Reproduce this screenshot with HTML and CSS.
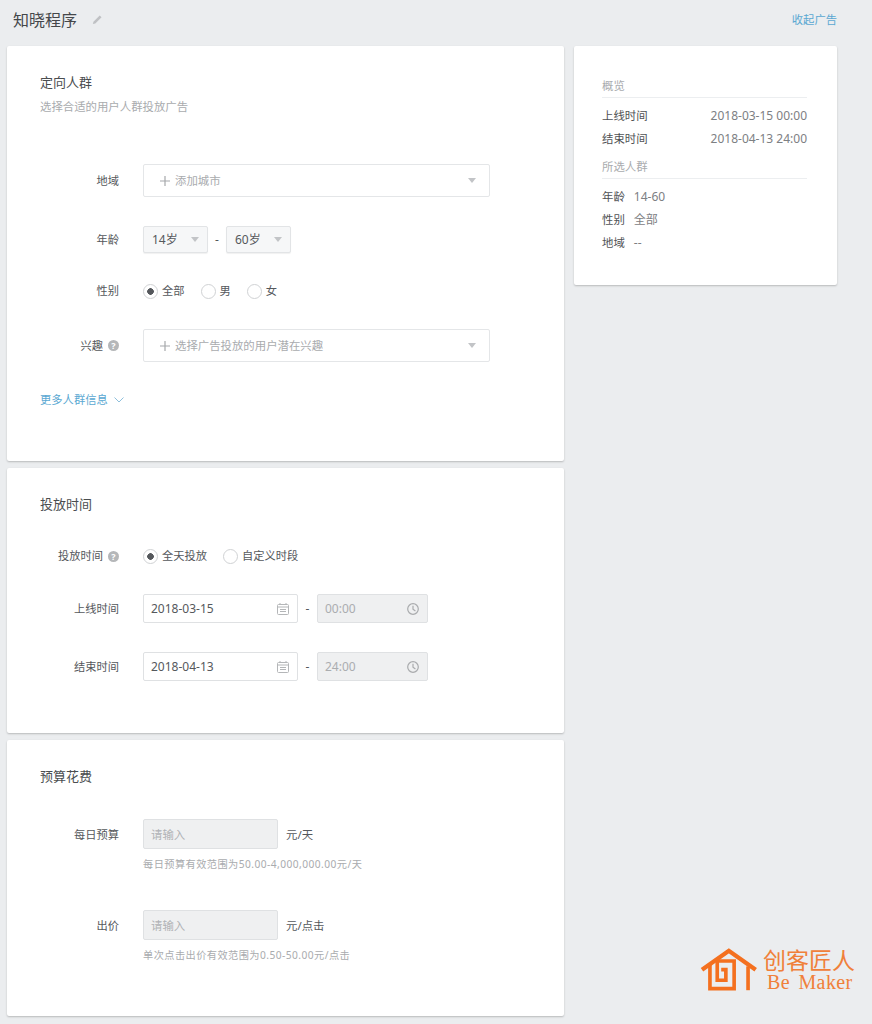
FILE: index.html
```html
<!DOCTYPE html>
<html lang="zh-CN">
<head>
<meta charset="utf-8">
<title>知晓程序</title>
<link rel="stylesheet" href="styles.css">
</head>
<body>
<header class="topbar">
  <div class="topbar-title">
    <h1>知晓程序</h1>
    <svg class="pencil" viewBox="0 0 12 12"><path d="M1 11l.6-2.6L8.4 1.6l2 2-6.8 6.8z" fill="#bfc1c4"/></svg>
  </div>
  <a class="link topbar-link">收起广告</a>
</header>
<main class="layout">
  <div class="col-main">
    <section class="card card-target">
      <h2>定向人群</h2>
      <p class="sub">选择合适的用户人群投放广告</p>
      <div class="row row-region">
        <span class="label">地域</span>
        <div class="picker">
          <svg class="plus" viewBox="0 0 10 10"><path d="M5 0v10M0 5h10" stroke="#a6a8ab" stroke-width="1.2" fill="none"/></svg><span class="placeholder">添加城市</span><i class="caret caret-end"></i>
        </div>
      </div>
      <div class="row row-age">
        <span class="label">年龄</span>
        <div class="select"><span>14岁</span><i class="caret"></i></div>
        <span class="dash">-</span>
        <div class="select"><span>60岁</span><i class="caret"></i></div>
      </div>
      <div class="row row-gender">
        <span class="label">性别</span>
        <label class="radio on">全部</label>
        <label class="radio">男</label>
        <label class="radio">女</label>
      </div>
      <div class="row row-interest">
        <span class="label">兴趣<i class="help">?</i></span>
        <div class="picker">
          <svg class="plus" viewBox="0 0 10 10"><path d="M5 0v10M0 5h10" stroke="#a6a8ab" stroke-width="1.2" fill="none"/></svg><span class="placeholder">选择广告投放的用户潜在兴趣</span><i class="caret caret-end"></i>
        </div>
      </div>
      <a class="link more">更多人群信息<svg class="chev" viewBox="0 0 10 6"><path d="M.5.5L5 5 9.5.5" fill="none" stroke="#8fc0dc" stroke-width="1"/></svg></a>
    </section>

    <section class="card card-time">
      <h2>投放时间</h2>
      <div class="row row-mode">
        <span class="label">投放时间<i class="help">?</i></span>
        <label class="radio on">全天投放</label>
        <label class="radio">自定义时段</label>
      </div>
      <div class="row row-date">
        <span class="label">上线时间</span>
        <div class="field field-date"><span>2018-03-15</span>
          <svg class="ficon" viewBox="0 0 12 12"><rect x=".5" y="1.5" width="11" height="10" rx="1" fill="none" stroke="#b4b6b8"/><path d="M.5 4h11M3 0v2M9 0v2M3 6.5h6M3 8.5h6" stroke="#b4b6b8" fill="none"/></svg>
        </div>
        <span class="dash">-</span>
        <div class="field field-time"><span>00:00</span>
          <svg class="ficon" viewBox="0 0 12 12"><circle cx="6" cy="6" r="5.3" fill="none" stroke="#a9abad" stroke-width="1.2"/><path d="M6 2.8V6.3L8.4 8" fill="none" stroke="#a9abad" stroke-width="1.2"/></svg>
        </div>
      </div>
      <div class="row row-date">
        <span class="label">结束时间</span>
        <div class="field field-date"><span>2018-04-13</span>
          <svg class="ficon" viewBox="0 0 12 12"><rect x=".5" y="1.5" width="11" height="10" rx="1" fill="none" stroke="#b4b6b8"/><path d="M.5 4h11M3 0v2M9 0v2M3 6.5h6M3 8.5h6" stroke="#b4b6b8" fill="none"/></svg>
        </div>
        <span class="dash">-</span>
        <div class="field field-time"><span>24:00</span>
          <svg class="ficon" viewBox="0 0 12 12"><circle cx="6" cy="6" r="5.3" fill="none" stroke="#a9abad" stroke-width="1.2"/><path d="M6 2.8V6.3L8.4 8" fill="none" stroke="#a9abad" stroke-width="1.2"/></svg>
        </div>
      </div>
    </section>

    <section class="card card-budget">
      <h2>预算花费</h2>
      <div class="row row-budget">
        <span class="label">每日预算</span>
        <div class="field field-money"><span>请输入</span></div>
        <span class="unit">元/天</span>
      </div>
      <p class="hint">每日预算有效范围为50.00-4,000,000.00元/天</p>
      <div class="row row-budget row-bid">
        <span class="label">出价</span>
        <div class="field field-money"><span>请输入</span></div>
        <span class="unit">元/点击</span>
      </div>
      <p class="hint">单次点击出价有效范围为0.50-50.00元/点击</p>
    </section>
  </div>

  <aside class="card summary">
    <h3>概览</h3>
    <dl class="spread">
      <div><dt>上线时间</dt><dd>2018-03-15 00:00</dd></div>
      <div><dt>结束时间</dt><dd>2018-04-13 24:00</dd></div>
    </dl>
    <h3 class="second">所选人群</h3>
    <dl class="tight">
      <div><dt>年龄</dt><dd>14-60</dd></div>
      <div><dt>性别</dt><dd>全部</dd></div>
      <div><dt>地域</dt><dd>--</dd></div>
    </dl>
  </aside>
</main>
<div class="brand">
  <svg class="brand-mark" viewBox="60 50 175 135">
    <path d="M66 118L147 61l81 57" fill="none" stroke="#f4701f" stroke-width="13"/>
    <path d="M90 104V175H163V92H112V150H138V118H124" fill="none" stroke="#f4701f" stroke-width="11"/>
    <path d="M205 108V180" fill="none" stroke="#f4701f" stroke-width="11"/>
  </svg>
  <div class="brand-text">
    <strong>创客匠人</strong>
    <span>Be Maker</span>
  </div>
</div>
</body>
</html>
```
FILE: styles.css
```css
* { box-sizing: border-box; }
html, body { margin: 0; padding: 0; }
body {
  position: relative;
  height: 1024px;
  overflow: hidden;
  background: #ebedef;
  color: #55585c;
  font: 12px/20px "Noto Sans", "Noto Sans CJK SC", sans-serif;
}
h1, h2, h3, p, dl, dd { margin: 0; font-weight: 400; }
i { font-style: normal; }

.topbar {
  display: flex;
  justify-content: space-between;
  align-items: center;
  width: 837px;
  height: 40px;
  padding-left: 13px;
}
.topbar-title { display: flex; align-items: center; }
.topbar h1 { font-size: 16px; color: #44474a; }
.pencil { width: 11px; height: 11px; margin: -2px 0 0 15px; }
.link { color: #5aa8d2; font-size: 11.3px; }

.layout {
  display: flex;
  align-items: flex-start;
  gap: 10px;
  margin-top: 6px;
  padding-left: 7px;
}
.col-main { display: flex; flex-direction: column; gap: 7px; width: 557px; }
.card {
  background: #fff;
  border-radius: 2px;
  box-shadow: 0 1px 2px rgba(0, 0, 0, .22);
}
.card h2 { font-size: 13px; color: #4a4d50; }
.card-target { height: 415px; padding: 26px 33px 0; }
.card-time { height: 265px; padding: 26px 33px 0; }
.card-budget { height: 276px; padding: 26px 33px 0; }
.sub { margin-top: 5px; font-size: 11.4px; color: #a9abae; }

.row { display: flex; align-items: center; }
.label {
  flex: none;
  display: flex;
  justify-content: flex-end;
  align-items: center;
  width: 79px;
  margin-right: 24px;
  font-size: 11.25px;
  color: #55585c;
}
.help {
  flex: none;
  width: 11px;
  height: 11px;
  margin-left: 5px;
  border-radius: 50%;
  background: #b5b7b9;
  color: #fff;
  font-size: 9px;
  font-weight: 700;
  line-height: 11px;
  text-align: center;
}
.row-region { height: 33px; margin-top: 47px; }
.row-age { height: 27px; margin-top: 29px; }
.row-gender { height: 20px; margin-top: 28px; }
.row-interest { height: 33px; margin-top: 28px; }
.more { display: flex; align-items: center; margin-top: 28px; }
.chev { width: 10px; height: 6px; margin-left: 6px; }

.picker {
  display: flex;
  align-items: center;
  width: 347px;
  height: 100%;
  padding: 0 17px 0 16px;
  border: 1px solid #e4e6e8;
  border-radius: 2px;
  color: #a9abae;
  font-size: 11.4px;
}
.plus { flex: none; width: 10px; height: 10px; margin-right: 5px; }
.caret {
  flex: none;
  width: 0;
  height: 0;
  border: 4px solid transparent;
  border-top: 5px solid #c2c4c7;
  border-bottom: 0;
}
.caret-end { margin-left: auto; margin-right: -4px; }

.select {
  display: flex;
  justify-content: space-between;
  align-items: center;
  width: 65px;
  height: 100%;
  padding: 0 8px;
  border: 1px solid #e2e4e6;
  border-radius: 2px;
  background: #f6f7f8;
  box-shadow: 0 1px 1px rgba(0, 0, 0, .06);
}
.dash { flex: none; width: 18px; text-align: center; color: #55585c; }
.row-date .dash { width: 19px; }

.radio {
  display: flex;
  align-items: center;
  margin-right: 16px;
  font-size: 11.25px;
  color: #55585c;
}
.radio::before {
  content: "";
  flex: none;
  width: 13px;
  height: 13px;
  margin-right: 4px;
  border: 1px solid #d0d2d4;
  border-radius: 50%;
  background: #fff;
}
.radio.on::before { background: radial-gradient(circle, #55585c 0 3px, #fff 3.6px); }

.row-mode { height: 20px; margin-top: 32px; }
.row-date { height: 29px; margin-top: 28px; }
.row-date + .row-date { margin-top: 29px; }
.row-date .label, .row-budget .label, .unit { padding-top: 1px; }
.field {
  display: flex;
  justify-content: space-between;
  align-items: center;
  height: 100%;
  padding: 1px 8px 0 7px;
  border: 1px solid #dfe1e3;
  border-radius: 2px;
}
.field-date { width: 155px; color: #55585c; }
.field-time { width: 111px; background: #eff0f1; color: #abadb0; }
.ficon { flex: none; width: 12px; height: 12px; margin-top: -1px; }

.row-budget { height: 30px; margin-top: 33px; }
.row-bid { margin-top: 36px; }
.field-money {
  width: 135px;
  background: #eff0f1;
  color: #b0b2b5;
  font-size: 11.4px;
}
.unit { margin-left: 8px; font-size: 11.4px; color: #55585c; }
.hint { margin: 5px 0 0 103px; font-size: 10.2px; letter-spacing: .45px; color: #a9abae; }

.summary { width: 263px; height: 239px; padding: 30px 30px 0 28px; }
.summary h3 {
  height: 22px;
  border-bottom: 1px solid #eceef0;
  font-size: 11.4px;
  color: #a9abae;
}
.summary .second { margin-top: 7px; }
.summary dl { margin-top: 6px; }
.summary dl div { display: flex; height: 23px; align-items: center; }
.summary dt { font-size: 11.4px; color: #4f5255; }
.summary dd { color: #7d8083; }
.spread div { justify-content: space-between; }
.tight dt { margin-right: 9px; }

.brand {
  position: absolute;
  left: 700px;
  top: 947px;
  display: flex;
  gap: 5px;
}
.brand-mark { width: 58px; height: 45px; }
.brand-text { display: flex; flex-direction: column; color: #f0803a; }
.brand-text strong { font: 400 23px/24px "Noto Sans CJK SC", sans-serif; white-space: nowrap; }
.brand-text span {
  margin: 1px 0 0 4px;
  font: 20px/20px "Liberation Serif", serif;
  letter-spacing: .4px;
  word-spacing: 3px;
  white-space: nowrap;
}
```
